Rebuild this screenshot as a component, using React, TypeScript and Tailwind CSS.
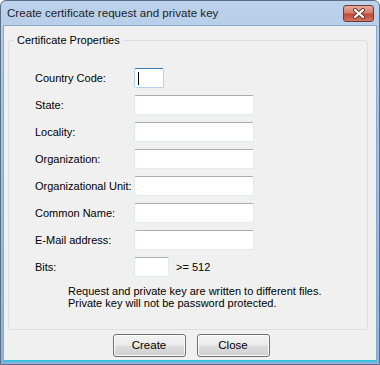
import React from "react";

const fields = [
  { label: "Country Code:", width: "w-[30px]", focused: true },
  { label: "State:", width: "w-[120px]" },
  { label: "Locality:", width: "w-[120px]" },
  { label: "Organization:", width: "w-[120px]" },
  { label: "Organizational Unit:", width: "w-[120px]" },
  { label: "Common Name:", width: "w-[120px]" },
  { label: "E-Mail address:", width: "w-[120px]" },
];

function TextBox({ width, focused }: { width: string; focused?: boolean }) {
  return (
    <div
      className={[
        "relative h-[20px] rounded-[2px] bg-white border",
        width,
        focused
          ? "border-[#b5d3ee] border-t-[#3d7bad]"
          : "border-[#e3e9ef] border-t-[#abadb3]",
      ].join(" ")}
    >
      {focused && (
        <span className="absolute left-[3px] top-[3px] w-px h-[13px] bg-black" />
      )}
    </div>
  );
}

function PushButton({ children }: { children: React.ReactNode }) {
  return (
    <button className="w-[73px] h-[23px] rounded-[3px] border border-[#707070] bg-[linear-gradient(#f2f2f2_0%,#ebebeb_48%,#dddddd_52%,#cfcfcf_100%)] shadow-[inset_0_0_0_1px_#fcfcfc] text-[11.5px] text-black leading-none">
      {children}
    </button>
  );
}

export default function App() {
  return (
    <div
      className="w-[380px] h-[365px] flex flex-col overflow-hidden rounded-t-[6px] border border-[#5a6f86] bg-[linear-gradient(#bdd2eb,#a6c3e4_30%,#8fb2dc)] text-black"
      style={{ fontFamily: '"Liberation Sans", Arial, sans-serif' }}
    >
      {/* Title bar */}
      <div className="h-[24px] flex items-start justify-between pl-[6px] pr-[5px] pt-[4px]">
        <span className="text-[11.6px] text-[#1e1e1e] leading-[16px]">
          Create certificate request and private key
        </span>
        <div className="w-[31px] h-[17px] rounded-[3px] border border-[#6f3a3a] bg-[linear-gradient(#e9a99a,#d47f6c_45%,#c24a36_55%,#d2735e)] flex items-center justify-center">
          <svg width="14" height="11" viewBox="0 0 14 11">
            <path d="M3 2 L11 9 M11 2 L3 9" stroke="#5b3a36" strokeWidth="4" strokeLinecap="round" />
            <path d="M3 2 L11 9 M11 2 L3 9" stroke="#ffffff" strokeWidth="2.2" strokeLinecap="round" />
          </svg>
        </div>
      </div>

      {/* Client area */}
      <div className="flex-1 mx-[2px] mb-[2px] bg-[#f0f0f0] border border-[#8aa8cc] border-b-[#39c2e0] border-b-2 flex flex-col">
        <fieldset className="ml-[4px] mt-[8px] w-[360px] h-[296px] border border-[#d5dfe5] rounded-[3px] px-[26px] pt-[21px]">
          <legend className="-ml-[21px] px-[3px] text-[11px] leading-[13px]">
            Certificate Properties
          </legend>
          <div className="flex flex-col gap-[7px]">
            {fields.map((f) => (
              <div key={f.label} className="flex items-center">
                <span className="w-[99px] text-[11px]">{f.label}</span>
                <TextBox width={f.width} focused={f.focused} />
              </div>
            ))}
            <div className="flex items-center">
              <span className="w-[99px] text-[11px]">Bits:</span>
              <TextBox width="w-[35px]" />
              <span className="ml-[7px] text-[11px]">&gt;= 512</span>
            </div>
          </div>
          <p className="mt-[8px] ml-[33px] text-[11px] leading-[12px]">
            Request and private key are written to different files.
            <br />
            Private key will not be password protected.
          </p>
        </fieldset>
        <div className="flex justify-center gap-[11px] mt-[4px] pl-[2px]">
          <PushButton>Create</PushButton>
          <PushButton>Close</PushButton>
        </div>
      </div>
    </div>
  );
}
